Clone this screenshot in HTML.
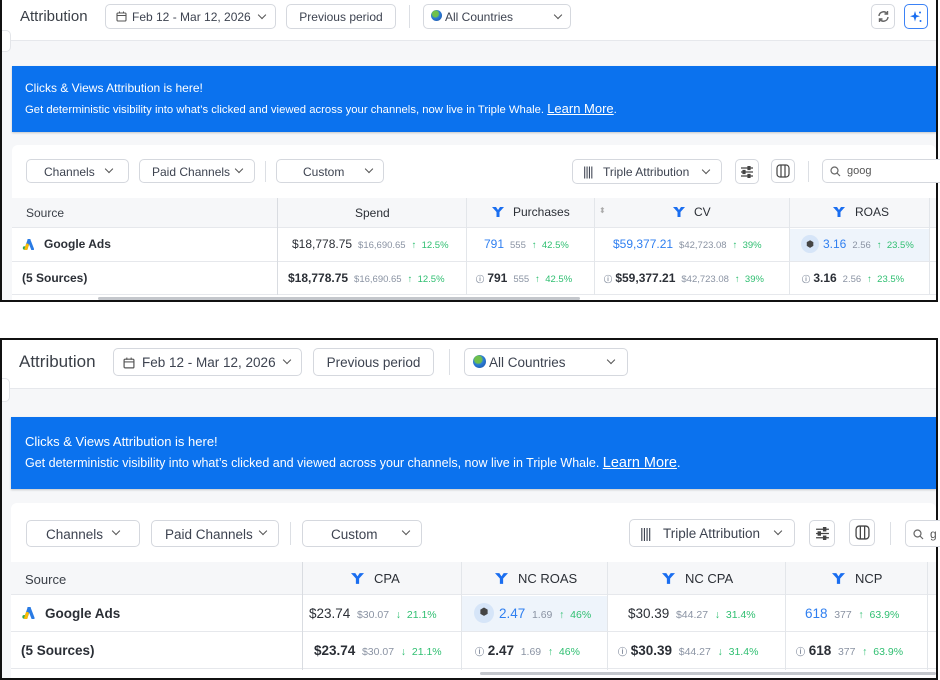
<!DOCTYPE html>
<html><head><meta charset="utf-8">
<style>
*{box-sizing:border-box;margin:0;padding:0}
body{width:940px;height:680px;background:#fff;position:relative;overflow:hidden;font-family:"Liberation Sans",sans-serif;color:#2b2f36}
.a{position:absolute;white-space:nowrap}
.btn{position:absolute;border:1px solid #d5d8de;border-radius:5px;background:#fff;display:flex;align-items:center;color:#3d4350}
.chev{position:absolute;width:6px;height:6px;border-right:1.4px solid #555;border-bottom:1.4px solid #555;transform:rotate(45deg)}
.sep{position:absolute;width:1px;background:#dcdfe4}
.banner{position:absolute;background:#0b72ee;color:#fff;box-shadow:0 1px 2px rgba(0,0,0,.2)}
.g{color:#8a93a3}
.up{color:#2fbf71}
.bl{color:#2f7ff0}
.vl{position:absolute;width:1px;background:#e3e6ea}
.hl{position:absolute;height:1px;background:#e6e8ec}
</style></head><body>

<!-- ===== TOP PANEL ===== -->
<div class="a" style="left:0;top:0;width:938px;height:302px;border-left:2px solid #111;border-right:2px solid #111;border-bottom:2px solid #111;background:#f6f7f9"></div>
<div class="a" style="left:2px;top:0;width:934px;height:41px;background:#fff;border-bottom:1px solid #e6e8ec"></div>
<div class="a" style="left:2px;top:30px;width:9px;height:22px;background:#fff;border:1px solid #e3e5e9;border-left:none;border-radius:0 5px 5px 0"></div>
<div class="a" style="left:20px;top:8px;font-size:15px;color:#3a3f47">Attribution</div>
<div class="btn" style="left:105px;top:4px;width:171px;height:25px;font-size:12px">
  <svg class="a" style="left:10px;top:6px" width="11" height="11" viewBox="0 0 11 11"><rect x="1" y="2" width="9" height="8" rx="1" fill="none" stroke="#555" stroke-width="1.1"/><line x1="1" y1="4.5" x2="10" y2="4.5" stroke="#555"/><line x1="3.5" y1="0.5" x2="3.5" y2="2.5" stroke="#555"/><line x1="7.5" y1="0.5" x2="7.5" y2="2.5" stroke="#555"/></svg>
  <span class="a" style="left:26px;top:5px">Feb 12 - Mar 12, 2026</span><span class="chev" style="left:153px;top:7px"></span></div>
<div class="btn" style="left:286px;top:4px;width:110px;height:25px;font-size:12px;justify-content:center">Previous period</div>
<div class="sep" style="left:409px;top:5px;height:23px"></div>
<div class="btn" style="left:423px;top:4px;width:148px;height:25px;font-size:12px">
  <span class="a" style="left:7px;top:5px;width:11px;height:11px;border-radius:50%;background:radial-gradient(circle at 40% 35%,#6fc04b 0 30%,#2a7bd8 45%,#1b4f9c)"></span>
  <span class="a" style="left:21px;top:5px">All Countries</span><span class="chev" style="left:131px;top:7px"></span></div>
<div class="btn" style="left:871px;top:4px;width:24px;height:25px;justify-content:center"><svg width="13" height="13" viewBox="0 0 13 13" fill="none" stroke="#666" stroke-width="1.4"><path d="M2 6a4.5 4.5 0 0 1 8-2.5M11 7a4.5 4.5 0 0 1-8 2.5"/><path d="M10.5 1v3h-3M2.5 12V9h3"/></svg></div>
<div class="btn" style="left:904px;top:4px;width:24px;height:25px;border-color:#3b82f6;justify-content:center"><svg width="14" height="14" viewBox="0 0 14 14" fill="#1a6ef0"><path d="M6 1 7.2 5 11 6.2 7.2 7.4 6 11.5 4.8 7.4 1 6.2 4.8 5z"/><circle cx="11" cy="2.5" r="1"/><circle cx="11.5" cy="11" r="1"/></svg></div>

<div class="banner" style="left:12px;top:66px;width:924px;height:66px">
  <div class="a" style="left:13px;top:15px;font-size:12px">Clicks &amp; Views Attribution is here!</div>
  <div class="a" style="left:13px;top:35px;font-size:11.3px">Get deterministic visibility into what’s clicked and viewed across your channels, now live in Triple Whale. <span style="font-size:13px;text-decoration:underline">Learn More</span>.</div>
</div>
<div class="a" style="left:12px;top:145px;width:924px;height:155px;background:#fff;border-radius:6px 6px 0 0"></div>
<div class="btn" style="left:26px;top:159px;width:103px;height:24px;font-size:12px"><span class="a" style="left:17px;top:5px">Channels</span><span class="chev" style="left:79px;top:6px"></span></div>
<div class="btn" style="left:139px;top:159px;width:116px;height:24px;font-size:12px"><span class="a" style="left:12px;top:5px">Paid Channels</span><span class="chev" style="left:96px;top:6px"></span></div>
<div class="sep" style="left:265px;top:161px;height:21px"></div>
<div class="btn" style="left:276px;top:159px;width:108px;height:24px;font-size:12px"><span class="a" style="left:26px;top:5px">Custom</span><span class="chev" style="left:89px;top:6px"></span></div>
<div class="btn" style="left:572px;top:159px;width:150px;height:25px;font-size:12px"><span class="a" style="left:10px;top:4px;font-size:13px;letter-spacing:-1px">||||</span><span class="a" style="left:30px;top:5px">Triple Attribution</span><span class="chev" style="left:130px;top:7px"></span></div>
<div class="btn" style="left:735px;top:159px;width:24px;height:25px;justify-content:center"><svg width="14" height="12" viewBox="0 0 14 12" stroke="#444" stroke-width="1.2"><path d="M1 2h12M1 6h12M1 10h12"/><rect x="8" y="0.5" width="2" height="3" fill="#444"/><rect x="3" y="4.5" width="2" height="3" fill="#444"/><rect x="8" y="8.5" width="2" height="3" fill="#444"/></svg></div>
<div class="btn" style="left:771px;top:159px;width:24px;height:24px;justify-content:center"><svg width="14" height="14" viewBox="0 0 14 14" fill="none" stroke="#444" stroke-width="1.2"><rect x="1" y="1" width="12" height="12" rx="3"/><path d="M5 1v12M9 1v12"/></svg></div>
<div class="sep" style="left:808px;top:161px;height:21px"></div>
<div class="btn" style="left:822px;top:159px;width:120px;height:24px;font-size:11px;border-right:none;border-radius:5px 0 0 5px"><svg class="a" style="left:7px;top:6px" width="11" height="11" viewBox="0 0 11 11" fill="none" stroke="#666" stroke-width="1.2"><circle cx="4.5" cy="4.5" r="3.5"/><path d="M7 7l3 3"/></svg><span class="a" style="left:24px;top:5px;color:#555">goog</span></div>

<!-- top table -->
<div class="a" style="left:12px;top:198px;width:924px;height:30px;background:#f6f7f9;border-bottom:1px solid #e6e8ec"></div>
<div class="hl" style="left:12px;top:261px;width:924px"></div>
<div class="hl" style="left:12px;top:294px;width:924px"></div>
<div class="vl" style="left:277px;top:198px;height:97px;background:#d9dce1"></div>
<div class="vl" style="left:466px;top:198px;height:97px"></div>
<div class="vl" style="left:594px;top:198px;height:97px"></div>
<div class="vl" style="left:789px;top:198px;height:97px"></div>
<div class="vl" style="left:929px;top:198px;height:97px"></div>
<div class="a" style="left:790px;top:229px;width:139px;height:32px;background:#eef4fb"></div>
<div class="a" style="left:26px;top:206px;font-size:12px;color:#3a3f47">Source</div>
<div class="a" style="left:355px;top:206px;font-size:12px">Spend</div>
<svg class="a" style="left:492px;top:207px" width="12" height="10" viewBox="0 0 12 10"><path d="M0 0h4l2 3 2-3h4l-4.5 5v5h-3v-5z" fill="#1a6ef0"/></svg><div class="a" style="left:513px;top:205px;font-size:12px">Purchases</div>
<div class="a" style="left:599px;top:206px;font-size:8px;color:#aaa">⬍</div>
<svg class="a" style="left:673px;top:207px" width="12" height="10" viewBox="0 0 12 10"><path d="M0 0h4l2 3 2-3h4l-4.5 5v5h-3v-5z" fill="#1a6ef0"/></svg><div class="a" style="left:694px;top:205px;font-size:12px">CV</div>
<svg class="a" style="left:833px;top:207px" width="12" height="10" viewBox="0 0 12 10"><path d="M0 0h4l2 3 2-3h4l-4.5 5v5h-3v-5z" fill="#1a6ef0"/></svg><div class="a" style="left:855px;top:205px;font-size:12px">ROAS</div>

<svg class="a" style="left:22px;top:239px" width="12" height="11" viewBox="0 0 12 11"><path d="M4 10 7 1" stroke="#2a7be4" stroke-width="3" stroke-linecap="round"/><path d="M7 1l3.5 9" stroke="#2a7be4" stroke-width="3" stroke-linecap="round"/><circle cx="2.5" cy="9" r="1.7" fill="#34a853"/><path d="M4 10l1.3-4" stroke="#fbbc04" stroke-width="3" stroke-linecap="round"/></svg>
<div class="a" style="left:44px;top:237px;font-size:12px;font-weight:bold">Google Ads</div>
<div class="a" style="left:22px;top:271px;font-size:12px;font-weight:bold">(5 Sources)</div>

<div class="a" style="left:292px;top:237px;font-size:12px">$18,778.75 <span class="g" style="font-size:9.5px">&nbsp;$16,690.65</span> <span class="up" style="font-size:9.5px">&nbsp;↑&nbsp; 12.5%</span></div>
<div class="a" style="left:288px;top:271px;font-size:12px;font-weight:bold">$18,778.75 <span class="g" style="font-size:9.5px;font-weight:normal">&nbsp;$16,690.65</span> <span class="up" style="font-size:9.5px;font-weight:normal">&nbsp;↑&nbsp; 12.5%</span></div>
<div class="a" style="left:484px;top:237px;font-size:12px"><span class="bl">791</span> <span class="g" style="font-size:9.5px">&nbsp;555</span> <span class="up" style="font-size:9.5px">&nbsp;↑&nbsp; 42.5%</span></div>
<div class="a" style="left:476px;top:271px;font-size:12px;font-weight:bold"><span class="g" style="font-size:8px">ⓘ</span> 791 <span class="g" style="font-size:9.5px;font-weight:normal">&nbsp;555</span> <span class="up" style="font-size:9.5px;font-weight:normal">&nbsp;↑&nbsp; 42.5%</span></div>
<div class="a" style="left:613px;top:237px;font-size:12px"><span class="bl">$59,377.21</span> <span class="g" style="font-size:9.5px">&nbsp;$42,723.08</span> <span class="up" style="font-size:9.5px">&nbsp;↑&nbsp; 39%</span></div>
<div class="a" style="left:604px;top:271px;font-size:12px;font-weight:bold"><span class="g" style="font-size:8px">ⓘ</span> $59,377.21 <span class="g" style="font-size:9.5px;font-weight:normal">&nbsp;$42,723.08</span> <span class="up" style="font-size:9.5px;font-weight:normal">&nbsp;↑&nbsp; 39%</span></div>
<div class="a" style="left:801px;top:235px;width:18px;height:18px;border-radius:50%;background:#d6e5f8;color:#444;font-size:9px;text-align:center;line-height:18px">⬢</div>
<div class="a" style="left:823px;top:237px;font-size:12px"><span class="bl">3.16</span> <span class="g" style="font-size:9.5px">&nbsp;2.56</span> <span class="up" style="font-size:9.5px">&nbsp;↑&nbsp; 23.5%</span></div>
<div class="a" style="left:802px;top:271px;font-size:12px;font-weight:bold"><span class="g" style="font-size:8px">ⓘ</span> 3.16 <span class="g" style="font-size:9.5px;font-weight:normal">&nbsp;2.56</span> <span class="up" style="font-size:9.5px;font-weight:normal">&nbsp;↑&nbsp; 23.5%</span></div>
<div class="a" style="left:98px;top:297px;width:482px;height:3px;background:#c4c7cc;border-radius:2px"></div>

<!-- ===== BOTTOM PANEL ===== -->
<div class="a" style="left:0;top:338px;width:938px;height:342px;border:2px solid #111;background:#f6f7f9"></div>
<div class="a" style="left:2px;top:340px;width:934px;height:49px;background:#fff;border-bottom:1px solid #e6e8ec"></div>
<div class="a" style="left:2px;top:378px;width:8px;height:24px;background:#fff;border:1px solid #e3e5e9;border-left:none;border-radius:0 5px 5px 0"></div>
<div class="a" style="left:19px;top:352px;font-size:17px;color:#3a3f47">Attribution</div>
<div class="btn" style="left:113px;top:348px;width:189px;height:28px;font-size:13.5px">
  <svg class="a" style="left:9px;top:8px" width="12" height="12" viewBox="0 0 11 11"><rect x="1" y="2" width="9" height="8" rx="1" fill="none" stroke="#555" stroke-width="1.1"/><line x1="1" y1="4.5" x2="10" y2="4.5" stroke="#555"/><line x1="3.5" y1="0.5" x2="3.5" y2="2.5" stroke="#555"/><line x1="7.5" y1="0.5" x2="7.5" y2="2.5" stroke="#555"/></svg>
  <span class="a" style="left:28px;top:6px">Feb 12 - Mar 12, 2026</span><span class="chev" style="left:170px;top:8px"></span></div>
<div class="btn" style="left:313px;top:348px;width:121px;height:28px;font-size:13.5px;justify-content:center">Previous period</div>
<div class="sep" style="left:449px;top:349px;height:26px"></div>
<div class="btn" style="left:464px;top:348px;width:164px;height:28px;font-size:13.5px">
  <span class="a" style="left:8px;top:6px;width:13px;height:13px;border-radius:50%;background:radial-gradient(circle at 40% 35%,#6fc04b 0 30%,#2a7bd8 45%,#1b4f9c)"></span>
  <span class="a" style="left:24px;top:6px">All Countries</span><span class="chev" style="left:143px;top:8px"></span></div>

<div class="banner" style="left:11px;top:417px;width:925px;height:72px">
  <div class="a" style="left:14px;top:17px;font-size:13px">Clicks &amp; Views Attribution is here!</div>
  <div class="a" style="left:14px;top:38px;font-size:12.5px">Get deterministic visibility into what’s clicked and viewed across your channels, now live in Triple Whale. <span style="font-size:14.5px;text-decoration:underline">Learn More</span>.</div>
</div>
<div class="a" style="left:11px;top:503px;width:925px;height:175px;background:#fff;border-radius:6px 6px 0 0"></div>
<div class="btn" style="left:26px;top:520px;width:114px;height:27px;font-size:13.5px"><span class="a" style="left:19px;top:6px">Channels</span><span class="chev" style="left:86px;top:7px"></span></div>
<div class="btn" style="left:151px;top:520px;width:128px;height:27px;font-size:13.5px"><span class="a" style="left:13px;top:6px">Paid Channels</span><span class="chev" style="left:108px;top:7px"></span></div>
<div class="sep" style="left:290px;top:522px;height:23px"></div>
<div class="btn" style="left:302px;top:520px;width:120px;height:27px;font-size:13.5px"><span class="a" style="left:28px;top:6px">Custom</span><span class="chev" style="left:100px;top:7px"></span></div>
<div class="btn" style="left:629px;top:519px;width:166px;height:28px;font-size:13.5px"><span class="a" style="left:10px;top:5px;font-size:14px;letter-spacing:-1px">||||</span><span class="a" style="left:33px;top:6px">Triple Attribution</span><span class="chev" style="left:145px;top:8px"></span></div>
<div class="btn" style="left:809px;top:520px;width:26px;height:27px;justify-content:center"><svg width="15" height="13" viewBox="0 0 14 12" stroke="#444" stroke-width="1.2"><path d="M1 2h12M1 6h12M1 10h12"/><rect x="8" y="0.5" width="2" height="3" fill="#444"/><rect x="3" y="4.5" width="2" height="3" fill="#444"/><rect x="8" y="8.5" width="2" height="3" fill="#444"/></svg></div>
<div class="btn" style="left:849px;top:519px;width:26px;height:27px;justify-content:center"><svg width="15" height="15" viewBox="0 0 14 14" fill="none" stroke="#444" stroke-width="1.2"><rect x="1" y="1" width="12" height="12" rx="3"/><path d="M5 1v12M9 1v12"/></svg></div>
<div class="sep" style="left:890px;top:522px;height:23px"></div>
<div class="btn" style="left:905px;top:520px;width:40px;height:27px;font-size:12px;border-right:none"><svg class="a" style="left:7px;top:8px" width="11" height="11" viewBox="0 0 11 11" fill="none" stroke="#666" stroke-width="1.2"><circle cx="4.5" cy="4.5" r="3.5"/><path d="M7 7l3 3"/></svg><span class="a" style="left:24px;top:6px;color:#555">g</span></div>

<!-- bottom table -->
<div class="a" style="left:11px;top:562px;width:925px;height:33px;background:#f6f7f9;border-bottom:1px solid #e6e8ec"></div>
<div class="hl" style="left:11px;top:631px;width:925px"></div>
<div class="hl" style="left:11px;top:668px;width:925px"></div>
<div class="vl" style="left:302px;top:562px;height:108px;background:#d9dce1"></div>
<div class="vl" style="left:461px;top:562px;height:108px"></div>
<div class="vl" style="left:607px;top:562px;height:108px"></div>
<div class="vl" style="left:785px;top:562px;height:108px"></div>
<div class="vl" style="left:927px;top:562px;height:108px"></div>
<div class="a" style="left:462px;top:596px;width:145px;height:35px;background:#eef4fb"></div>
<div class="a" style="left:25px;top:572px;font-size:13px;color:#3a3f47">Source</div>
<svg class="a" style="left:351px;top:573px" width="13" height="11" viewBox="0 0 12 10"><path d="M0 0h4l2 3 2-3h4l-4.5 5v5h-3v-5z" fill="#1a6ef0"/></svg><div class="a" style="left:374px;top:571px;font-size:13px">CPA</div>
<svg class="a" style="left:495px;top:573px" width="13" height="11" viewBox="0 0 12 10"><path d="M0 0h4l2 3 2-3h4l-4.5 5v5h-3v-5z" fill="#1a6ef0"/></svg><div class="a" style="left:518px;top:571px;font-size:13px">NC ROAS</div>
<svg class="a" style="left:662px;top:573px" width="13" height="11" viewBox="0 0 12 10"><path d="M0 0h4l2 3 2-3h4l-4.5 5v5h-3v-5z" fill="#1a6ef0"/></svg><div class="a" style="left:685px;top:571px;font-size:13px">NC CPA</div>
<svg class="a" style="left:832px;top:573px" width="13" height="11" viewBox="0 0 12 10"><path d="M0 0h4l2 3 2-3h4l-4.5 5v5h-3v-5z" fill="#1a6ef0"/></svg><div class="a" style="left:855px;top:571px;font-size:13px">NCP</div>

<svg class="a" style="left:21px;top:607px" width="14" height="12" viewBox="0 0 12 11"><path d="M4 10 7 1" stroke="#2a7be4" stroke-width="3" stroke-linecap="round"/><path d="M7 1l3.5 9" stroke="#2a7be4" stroke-width="3" stroke-linecap="round"/><circle cx="2.5" cy="9" r="1.7" fill="#34a853"/><path d="M4 10l1.3-4" stroke="#fbbc04" stroke-width="3" stroke-linecap="round"/></svg>
<div class="a" style="left:45px;top:606px;font-size:13.5px;font-weight:bold">Google Ads</div>
<div class="a" style="left:21px;top:643px;font-size:13.5px;font-weight:bold">(5 Sources)</div>

<div class="a" style="left:309px;top:606px;font-size:13.5px">$23.74 <span class="g" style="font-size:10.5px">&nbsp;$30.07</span> <span class="up" style="font-size:10.5px">&nbsp;↓&nbsp; 21.1%</span></div>
<div class="a" style="left:314px;top:643px;font-size:13.5px;font-weight:bold">$23.74 <span class="g" style="font-size:10.5px;font-weight:normal">&nbsp;$30.07</span> <span class="up" style="font-size:10.5px;font-weight:normal">&nbsp;↓&nbsp; 21.1%</span></div>
<div class="a" style="left:474px;top:603px;width:20px;height:20px;border-radius:50%;background:#d6e5f8;color:#444;font-size:10px;text-align:center;line-height:20px">⬢</div>
<div class="a" style="left:499px;top:606px;font-size:13.5px"><span class="bl">2.47</span> <span class="g" style="font-size:10.5px">&nbsp;1.69</span> <span class="up" style="font-size:10.5px">&nbsp;↑&nbsp; 46%</span></div>
<div class="a" style="left:475px;top:643px;font-size:13.5px;font-weight:bold"><span class="g" style="font-size:9px">ⓘ</span> 2.47 <span class="g" style="font-size:10.5px;font-weight:normal">&nbsp;1.69</span> <span class="up" style="font-size:10.5px;font-weight:normal">&nbsp;↑&nbsp; 46%</span></div>
<div class="a" style="left:628px;top:606px;font-size:13.5px">$30.39 <span class="g" style="font-size:10.5px">&nbsp;$44.27</span> <span class="up" style="font-size:10.5px">&nbsp;↓&nbsp; 31.4%</span></div>
<div class="a" style="left:618px;top:643px;font-size:13.5px;font-weight:bold"><span class="g" style="font-size:9px">ⓘ</span> $30.39 <span class="g" style="font-size:10.5px;font-weight:normal">&nbsp;$44.27</span> <span class="up" style="font-size:10.5px;font-weight:normal">&nbsp;↓&nbsp; 31.4%</span></div>
<div class="a" style="left:805px;top:606px;font-size:13.5px"><span class="bl">618</span> <span class="g" style="font-size:10.5px">&nbsp;377</span> <span class="up" style="font-size:10.5px">&nbsp;↑&nbsp; 63.9%</span></div>
<div class="a" style="left:796px;top:643px;font-size:13.5px;font-weight:bold"><span class="g" style="font-size:9px">ⓘ</span> 618 <span class="g" style="font-size:10.5px;font-weight:normal">&nbsp;377</span> <span class="up" style="font-size:10.5px;font-weight:normal">&nbsp;↑&nbsp; 63.9%</span></div>
<div class="a" style="left:480px;top:672px;width:456px;height:3px;background:#c4c7cc;border-radius:2px"></div>

</body></html>
